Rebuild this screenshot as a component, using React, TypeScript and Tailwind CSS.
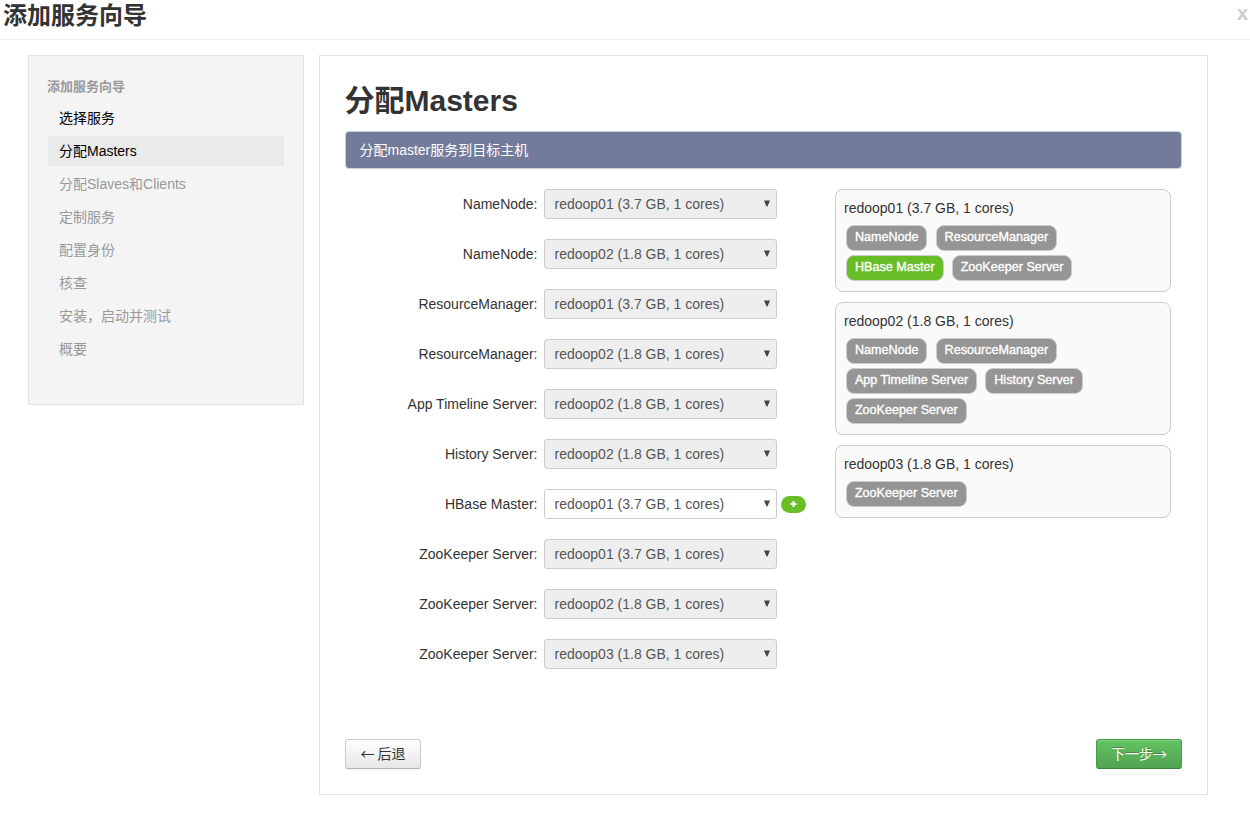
import React from "react";

const steps = ["选择服务", "分配Masters", "分配Slaves和Clients", "定制服务", "配置身份", "核查", "安装，启动并测试", "概要"];

const hosts = {
  h1: "redoop01 (3.7 GB, 1 cores)",
  h2: "redoop02 (1.8 GB, 1 cores)",
  h3: "redoop03 (1.8 GB, 1 cores)",
};

const assignments = [
  { name: "NameNode", host: hosts.h1 },
  { name: "NameNode", host: hosts.h2 },
  { name: "ResourceManager", host: hosts.h1 },
  { name: "ResourceManager", host: hosts.h2 },
  { name: "App Timeline Server", host: hosts.h2 },
  { name: "History Server", host: hosts.h2 },
  { name: "HBase Master", host: hosts.h1, editable: true },
  { name: "ZooKeeper Server", host: hosts.h1 },
  { name: "ZooKeeper Server", host: hosts.h2 },
  { name: "ZooKeeper Server", host: hosts.h3 },
];

const hostCards = [
  { host: hosts.h1, rows: [["NameNode", "ResourceManager"], ["HBase Master", "ZooKeeper Server"]] },
  { host: hosts.h2, rows: [["NameNode", "ResourceManager"], ["App Timeline Server", "History Server"], ["ZooKeeper Server"]] },
  { host: hosts.h3, rows: [["ZooKeeper Server"]] },
];

function Sidebar() {
  return (
    <nav className="h-[350px] w-[276px] shrink-0 border border-[#e1e1e1] bg-[#f4f4f4] px-[19px] pt-[21px]">
      <div className="-ml-px h-5 text-[13px] font-bold leading-5 text-[#999]">添加服务向导</div>
      <ul className="mt-1.5 flex flex-col gap-[3px]">
        {steps.map((s, i) => (
          <li
            key={s}
            className={`h-[30px] px-[11px] leading-[30px] ${i === 1 ? "bg-[#eaeaea]" : ""} ${i < 2 ? "text-black" : "text-[#999]"}`}
          >
            {s}
          </li>
        ))}
      </ul>
    </nav>
  );
}

function HostSelect({ host, editable }: { host: string; editable?: boolean }) {
  return (
    <div
      className={`flex h-[30px] w-[233px] items-center justify-between rounded-[3px] border border-[#ccc] pl-[9.5px] pr-[5px] text-[#555] ${editable ? "bg-white" : "bg-[#eee]"}`}
    >
      <span>{host}</span>
      <svg className="mb-px" width="8" height="7" viewBox="0 0 8 7" fill="#444">
        <path d="M1 0.5H7L4.4 6.5H3.6Z" />
      </svg>
    </div>
  );
}

function HostCard({ host, rows }: { host: string; rows: string[][] }) {
  return (
    <section className="rounded-[8px] border border-[#ccc] bg-[#fafafa] px-2 pb-[10px] pt-2">
      <div className="h-5 leading-5">{host}</div>
      <div className="ml-0.5 mt-[7px] flex flex-col gap-1">
        {rows.map((row, i) => (
          <div key={i} className="flex gap-[8.2px]">
            {row.map((c) => (
              <span
                key={c}
                className={`flex h-[26px] items-center rounded-[8px] border border-[#ccc] px-[7.9px] pb-px text-[12.6px] text-white [-webkit-text-stroke:0.35px_white] ${c === "HBase Master" ? "bg-[#69be28]" : "bg-[#959595]"}`}
              >
                {c}
              </span>
            ))}
          </div>
        ))}
      </div>
    </section>
  );
}

export default function App() {
  return (
    <div className="h-[816px] w-[1250px] overflow-hidden bg-white font-['Liberation_Sans','Noto_Sans_CJK_SC',sans-serif] text-[14px] text-[#333]">
      <header className="flex h-10 justify-between border-b border-[#eee] pl-[3px] pr-[2px]">
        <h1 className="h-[31px] text-[24px] font-bold leading-[31px]">添加服务向导</h1>
        <button className="h-[27px] text-[20px] font-bold leading-[27px] text-[#ccc]">x</button>
      </header>
      <div className="flex gap-[15px] pl-7 pt-[15px]">
        <Sidebar />
        <main className="h-[740px] w-[889px] border border-[#e1e1e1] px-[25px] pt-[25px]">
          <h2 className="-ml-[0.5px] h-10 text-[30px] font-bold leading-10">分配Masters</h2>
          <p className="mt-[10px] h-[38px] w-[837px] rounded-[4px] border border-[#c8d3dd] bg-[#727b9a] px-[13.5px] leading-9 text-white">
            分配master服务到目标主机
          </p>
          <div className="mt-5 flex h-[530px] items-start">
            <div className="flex w-[490px] flex-col gap-5">
              {assignments.map((a, i) => (
                <div key={i} className="flex h-[30px] items-center">
                  <label className="mr-[6.5px] w-[192.5px] text-right">{a.name}:</label>
                  <HostSelect host={a.host} editable={a.editable} />
                  {a.editable && (
                    <button className="ml-1 flex h-[17px] w-[25px] items-center justify-center rounded-full bg-[#69be28]">
                      <svg width="9" height="8" viewBox="0 0 9 8" fill="white">
                        <path d="M3.5 1H5.5V3H7.5V5H5.5V7H3.5V5H1.5V3H3.5Z" />
                      </svg>
                    </button>
                  )}
                </div>
              ))}
            </div>
            <div className="flex w-[336px] flex-col gap-[10px]">
              {hostCards.map((c) => (
                <HostCard key={c.host} host={c.host} rows={c.rows} />
              ))}
            </div>
          </div>
          <div className="mt-5 flex w-[837px] justify-between">
            <button className="flex h-[30px] w-[76px] items-center justify-center rounded-[3px] border border-[#ccc] border-b-[#b3b3b3] bg-gradient-to-b from-white to-[#e6e6e6] pb-0.5 font-['Noto_Sans_CJK_SC',sans-serif] leading-5 shadow-[0_1px_2px_rgba(0,0,0,0.05)]">
              ← 后退
            </button>
            <button className="flex h-[30px] w-[86px] items-center justify-center rounded-[3px] border border-[#489a48] border-b-[#3a803a] bg-gradient-to-b from-[#62c462] to-[#51a351] pb-0.5 font-['Noto_Sans_CJK_SC',sans-serif] leading-5 text-white shadow-[inset_0_1px_0_rgba(255,255,255,0.2)] [text-shadow:0_-1px_0_rgba(0,0,0,0.25)]">
              下一步→
            </button>
          </div>
        </main>
      </div>
    </div>
  );
}
